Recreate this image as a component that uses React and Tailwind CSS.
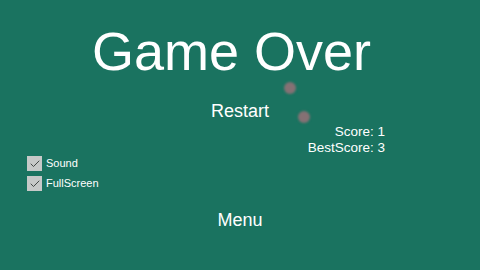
import { Check } from 'lucide-react';

function Toggle({ label }) {
  return (
    <label className="flex h-[15px] items-center gap-[4px]">
      <span className="flex h-[15px] w-[15px] items-center justify-center bg-[#c6c9c8]">
        <Check size={12} strokeWidth={1.8} className="text-[#353b39]" />
      </span>
      <span className="text-[11px] leading-none text-white">{label}</span>
    </label>
  );
}

export default function App() {
  return (
    <main
      className="relative flex h-[270px] w-[480px] flex-col overflow-hidden bg-[#1a7360] text-white"
      style={{ fontFamily: '"Liberation Sans", Arial, sans-serif' }}
    >
      {/* Falling balls left on screen */}
      <span className="absolute left-[284px] top-[82px] h-[12px] w-[12px] rounded-full bg-[#857174] blur-[0.8px]" />
      <span className="absolute left-[298px] top-[111px] h-[12px] w-[12px] rounded-full bg-[#857174] blur-[0.8px]" />

      <h1 className="ml-[92px] mt-[24px] text-[54px] leading-none font-normal">Game Over</h1>

      <button className="mx-auto mt-[24px] text-[18px] leading-none">Restart</button>

      <div className="mt-[4px] flex flex-col items-end pr-[95px] text-[13.5px] leading-[16px]">
        <span>Score: 1</span>
        <span>BestScore: 3</span>
      </div>

      <div className="ml-[27px] flex flex-col gap-[5px]">
        <Toggle label="Sound" />
        <Toggle label="FullScreen" />
      </div>

      <button className="mx-auto mt-[20px] text-[18px] leading-none">Menu</button>
    </main>
  );
}
